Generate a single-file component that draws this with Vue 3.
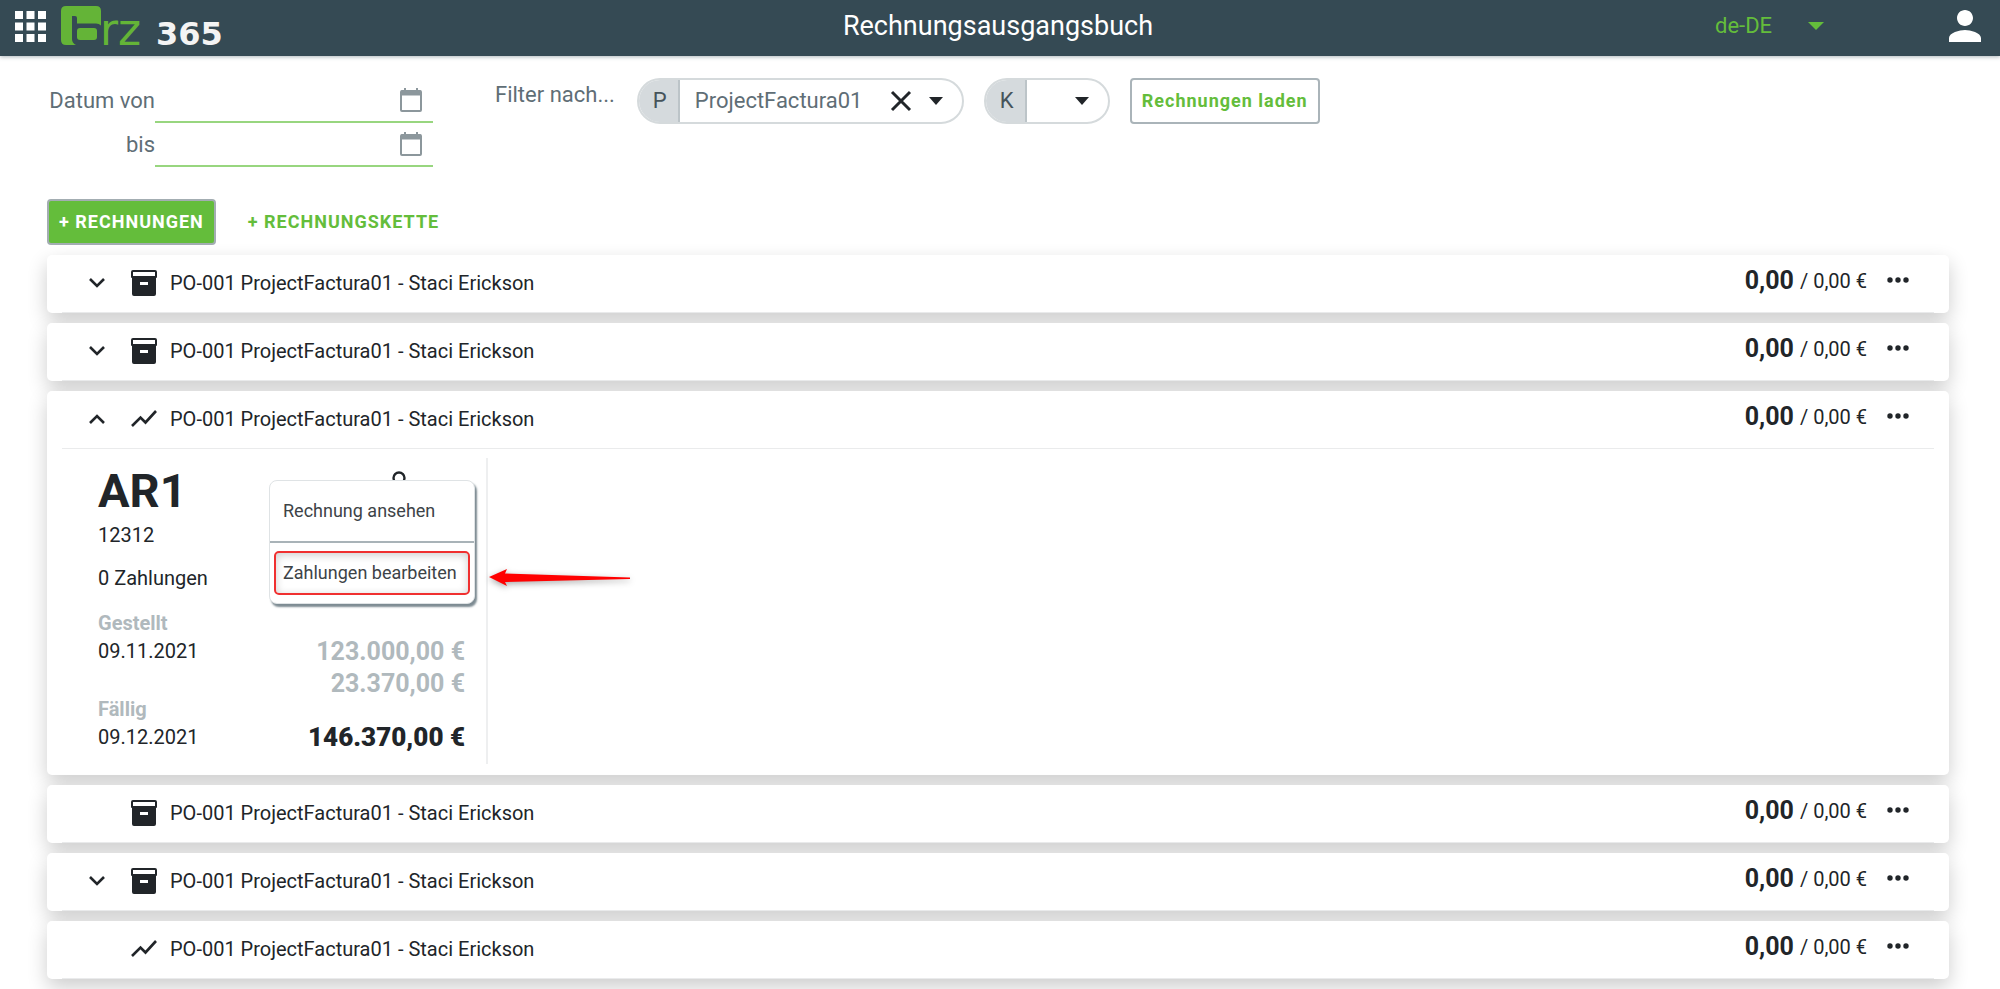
<script setup>
import { ref } from 'vue'

const dateFrom = ref('')
const dateTo = ref('')
const locale = ref('de-DE')
const project = ref('ProjectFactura01')
const customer = ref('')

const title = 'PO-001 ProjectFactura01 - Staci Erickson'
const rows = ref([
  { id: 1, kind: 'archive', toggle: true, open: false },
  { id: 2, kind: 'archive', toggle: true, open: false },
  { id: 3, kind: 'trend', toggle: true, open: true },
  { id: 4, kind: 'archive', toggle: false, open: false },
  { id: 5, kind: 'archive', toggle: true, open: false },
  { id: 6, kind: 'trend', toggle: false, open: false },
])
</script>

<template>
  <div class="page">
    <header class="topbar">
      <div class="brand">
        <button class="icon-btn" aria-label="Apps">
          <svg width="31" height="31" viewBox="0 0 31 31" fill="#fff">
            <template v-for="y in 3" :key="y">
              <rect v-for="x in 3" :key="x" :x="(x - 1) * 11.5" :y="(y - 1) * 11.5" width="8" height="8" />
            </template>
          </svg>
        </button>
        <a class="logo" href="#" aria-label="brz 365">
          <svg width="184" height="40" viewBox="0 0 184 40">
            <path
              d="M5 0H35Q40 0 40 5V19.500Q38 17.500 35 17.500H16V12Q16 10 14 10H11V33Q11 37 15 39H5Q0 39 0 34V5Q0 0 5 0Z"
              fill="#64b437"
            />
            <rect x="16" y="22" width="20" height="12" rx="3" fill="#64b437" />
            <text x="39" y="39" class="logo-rz">rz</text>
            <text x="95" y="39" class="logo-num">365</text>
          </svg>
        </a>
      </div>
      <h1>Rechnungsausgangsbuch</h1>
      <div class="account">
        <label class="locale">
          <select v-model="locale" aria-label="Sprache">
            <option>de-DE</option>
          </select>
          <svg width="16" height="8" viewBox="0 0 16 8"><path d="M0 0H16L8 8Z" fill="#64bd3b" /></svg>
        </label>
        <button class="icon-btn" aria-label="Konto">
          <svg width="32" height="32" viewBox="4 4 16 16" fill="#fff">
            <path d="M12 12c2.210 0 4-1.790 4-4s-1.790-4-4-4-4 1.790-4 4 1.790 4 4 4zm0 2c-2.670 0-8 1.340-8 4v2h16v-2c0-2.660-5.330-4-8-4z" />
          </svg>
        </button>
      </div>
    </header>

    <main>
      <section class="filters">
        <div class="dates">
          <label for="from">Datum von</label>
          <div class="date">
            <input id="from" v-model="dateFrom" type="text" />
            <svg width="22" height="24" viewBox="0 0 22 24" fill="none" stroke="#8c979c" stroke-width="2">
              <rect x="1" y="3" width="20" height="20" rx="1" />
              <path d="M1 5H21" stroke-width="5" />
              <path d="M5 0V4M17 0V4" />
            </svg>
          </div>
          <label for="to">bis</label>
          <div class="date">
            <input id="to" v-model="dateTo" type="text" />
            <svg width="22" height="24" viewBox="0 0 22 24" fill="none" stroke="#8c979c" stroke-width="2">
              <rect x="1" y="3" width="20" height="20" rx="1" />
              <path d="M1 5H21" stroke-width="5" />
              <path d="M5 0V4M17 0V4" />
            </svg>
          </div>
        </div>
        <span class="filter-label">Filter nach...</span>
        <div class="pill pill-project">
          <label for="project">P</label>
          <select id="project" v-model="project">
            <option>ProjectFactura01</option>
          </select>
          <button class="icon-btn" aria-label="Auswahl entfernen">
            <svg width="22" height="22" viewBox="0 0 22 22" stroke="#212529" stroke-width="3">
              <path d="M2 2L20 20M20 2L2 20" />
            </svg>
          </button>
          <svg class="caret" width="14" height="8" viewBox="0 0 14 8"><path d="M0 0H14L7 8Z" fill="#212529" /></svg>
        </div>
        <div class="pill pill-customer">
          <label for="customer">K</label>
          <select id="customer" v-model="customer">
            <option value=""></option>
          </select>
          <svg class="caret" width="14" height="8" viewBox="0 0 14 8"><path d="M0 0H14L7 8Z" fill="#212529" /></svg>
        </div>
        <button class="btn outline">Rechnungen laden</button>
      </section>

      <nav class="actions">
        <button class="btn solid">+ RECHNUNGEN</button>
        <button class="btn plain">+ RECHNUNGSKETTE</button>
      </nav>

      <section class="list">
        <article v-for="row in rows" :key="row.id" class="card">
          <div class="head">
            <div class="toggle">
              <button v-if="row.toggle" class="icon-btn" :aria-expanded="row.open" aria-label="Details">
                <svg width="16" height="10" viewBox="0 0 16 10" fill="none" stroke="#212529" stroke-width="2.600">
                  <path :d="row.open ? 'M1 9L8 2L15 9' : 'M1 1L8 8L15 1'" />
                </svg>
              </button>
            </div>
            <svg v-if="row.kind === 'archive'" class="kind" width="26" height="26" viewBox="0 0 26 26">
              <path d="M2 0H24Q26 0 26 2V7Q26 8 25 8V24Q25 26 23 26H3Q1 26 1 24V8Q0 8 0 7V2Q0 0 2 0Z" fill="#212529" />
              <path d="M2 2H24V6H2Z" fill="#fff" />
              <path d="M9 12H17V15H9Z" fill="#fff" />
            </svg>
            <svg v-else class="kind" width="26" height="26" viewBox="0 0 26 26" fill="none" stroke="#212529" stroke-width="2.600">
              <path d="M1 20L9.500 11.500L14.500 16.500L25 5" />
            </svg>
            <span class="name">{{ title }}</span>
            <span class="sum"><b>0,00</b><span>/ 0,00 €</span></span>
            <button class="icon-btn more" aria-label="Mehr">
              <svg width="22" height="6" viewBox="0 0 22 6" fill="#212529">
                <circle cx="3" cy="3" r="2.700" /><circle cx="11" cy="3" r="2.700" /><circle cx="19" cy="3" r="2.700" />
              </svg>
            </button>
          </div>

          <div v-if="row.open" class="invoice">
            <h2>AR1</h2>
            <p class="number">12312</p>
            <p class="payments">0 Zahlungen</p>
            <div class="figures">
              <dl>
                <dt>Gestellt</dt>
                <dd>09.11.2021</dd>
                <dt>Fällig</dt>
                <dd>09.12.2021</dd>
              </dl>
              <div class="amounts">
                <span>123.000,00 €</span>
                <span>23.370,00 €</span>
                <strong>146.370,00 €</strong>
              </div>
            </div>
            <svg class="state" width="16" height="24" viewBox="0 0 16 24" fill="none" stroke="#212529" stroke-width="2.400">
              <circle cx="8" cy="8" r="5.500" />
            </svg>
            <div class="menu">
              <button>Rechnung ansehen</button>
              <button class="marked"><span>Zahlungen bearbeiten</span></button>
            </div>
            <svg class="arrow" width="146" height="28" viewBox="0 0 146 28">
              <path d="M1 13L19 5L17 9.500L142 13.500V15L17 18L19 22Z" fill="#ff0000" />
            </svg>
          </div>
        </article>
      </section>
    </main>
  </div>
</template>

<style>
body {
  background: #fff;
}
</style>

<style scoped>
.page {
  box-sizing: border-box;
  min-height: 100vh;
  font-family: Roboto, "Liberation Sans", sans-serif;
  font-size: 20px;
  line-height: 28px;
  color: #212529;
}
.page * {
  box-sizing: border-box;
}
button,
input,
select {
  font: inherit;
  color: inherit;
  background: none;
  border: 0;
  padding: 0;
  margin: 0;
  appearance: none;
}
svg {
  display: block;
  flex: none;
}
h1,
h2,
p,
dl,
dd {
  margin: 0;
}
.topbar {
  display: grid;
  grid-template-columns: 1fr auto 1fr;
  align-items: center;
  height: 56px;
  padding: 0 19px 4px 15px;
  background: #354a54;
  box-shadow: 0 1px 4px rgba(53, 74, 84, 0.4);
}
.topbar h1 {
  font-size: 27px;
  font-weight: 400;
  color: #fff;
}
.brand,
.account,
.locale {
  display: flex;
  align-items: center;
}
.brand {
  gap: 15px;
}
.logo svg {
  overflow: visible;
}
.logo-rz {
  font: 44px "DejaVu Sans", sans-serif;
  fill: #64b437;
}
.logo-num {
  font: bold 32px "DejaVu Sans", sans-serif;
  fill: #f4f4f4;
}
.account {
  justify-content: flex-end;
  gap: 125px;
}
.locale {
  gap: 35px;
  font-size: 22px;
  color: #64bd3b;
}
main {
  padding: 22px 51px 10px 47px;
}
.filters {
  display: flex;
  align-items: flex-start;
  font-size: 22px;
  color: #5f6e76;
}
.dates {
  display: grid;
  grid-template-columns: minmax(108px, auto) 278px;
  text-align: right;
}
.dates label {
  line-height: 46px;
  height: 44px;
}
.date {
  display: flex;
  align-items: center;
  height: 44px;
  margin-top: 1px;
  margin-bottom: -1px;
  padding-right: 11px;
  border-bottom: 2px solid #98d67f;
}
.date input {
  flex: 1;
  min-width: 0;
}
.filter-label {
  margin: 3px 22px 0 62px;
}
.pill {
  display: flex;
  align-items: center;
  height: 46px;
  border: 2px solid #d5dadc;
  border-radius: 23px;
  overflow: hidden;
}
.pill label {
  width: 41px;
  line-height: 44px;
  padding-left: 14px;
  background: #d5dadd;
  border-right: 2px solid #bcc4c8;
  color: #46545b;
}
.pill select {
  padding-left: 15px;
}
.pill .caret {
  margin-right: 19px;
}
.pill-project {
  width: 327px;
  margin-right: 20px;
}
.pill-project select {
  flex: 1;
}
.pill-project .icon-btn {
  margin-right: 17px;
}
.pill-customer {
  width: 126px;
  margin-right: 20px;
}
.pill-customer select {
  flex: 1;
  min-width: 0;
}
.btn {
  height: 46px;
  padding: 0 10px;
  border: 2px solid transparent;
  border-radius: 4px;
  font-size: 18px;
  font-weight: 700;
  letter-spacing: 1px;
  color: #64bd3b;
}
.btn.outline {
  border-color: #aab4b9;
}
.btn.solid {
  border-color: #a3adb2;
  background: #64bd3b;
  color: #fff;
}
.actions {
  display: flex;
  gap: 20px;
  margin: 33px 0 10px;
}
.list {
  display: flex;
  flex-direction: column;
  gap: 10px;
}
.card {
  background: #fff;
  border-radius: 5px;
  box-shadow: 0 8px 20px rgba(0, 0, 0, 0.2);
}
.head {
  display: flex;
  align-items: center;
  height: 58px;
  margin: 0 15px;
  padding: 0 25px 2px 20px;
  border-bottom: 1px solid #eaebec;
}
.toggle {
  display: flex;
  width: 49px;
  padding-left: 7px;
}
.name {
  flex: 1;
  padding-left: 13px;
}
.sum {
  display: flex;
  align-items: center;
  gap: 6px;
  padding-bottom: 4px;
}
.sum b {
  font-size: 25px;
}
.more {
  margin-left: 20px;
  padding-bottom: 5px;
}
.invoice {
  position: relative;
  width: 426px;
  padding: 5px 21px 11px 36px;
  margin: 9px 15px 0;
  border-right: 2px solid #eeeff0;
}
.card:has(.invoice) {
  padding-bottom: 11px;
}
.invoice h2 {
  font-size: 47px;
  line-height: 56px;
}
.number {
  line-height: 32px;
}
.payments {
  line-height: 32px;
  margin: 11px 0 15px;
}
.figures {
  display: flex;
  justify-content: space-between;
}
dt {
  font-weight: 700;
  color: #b0b9bd;
}
dd + dt {
  margin-top: 30px;
}
.amounts {
  display: flex;
  flex-direction: column;
  padding-top: 27px;
  text-align: right;
  font-size: 25px;
  font-weight: 700;
  line-height: 32px;
  color: #b0b9bd;
}
.amounts strong {
  margin-top: 21px;
  font-size: 26px;
  color: #212529;
}
.state {
  position: absolute;
  top: 12px;
  left: 329px;
}
.menu {
  position: absolute;
  top: 22px;
  left: 207px;
  display: flex;
  flex-direction: column;
  width: 206px;
  border: 1px solid #dfe3e5;
  border-radius: 8px;
  background: #fff;
  box-shadow: 2px 3px 2px #7d8b92;
  font-size: 18px;
  color: #3d4347;
}
.menu button {
  height: 60px;
  padding: 0 4px 0 13px;
  text-align: left;
}
.menu .marked {
  height: 62px;
  padding: 0 4px;
  border-top: 2px solid #a9b3b8;
}
.marked span {
  display: block;
  padding: 6px 7px;
  border: 2px solid #f03030;
  border-radius: 5px;
  line-height: 28px;
  white-space: nowrap;
  box-shadow: inset 0 2px 8px rgba(0, 0, 0, 0.2);
}
.arrow {
  position: absolute;
  top: 106px;
  left: 426px;
  filter: drop-shadow(0 2px 3px rgba(0, 0, 0, 0.35));
}
</style>
